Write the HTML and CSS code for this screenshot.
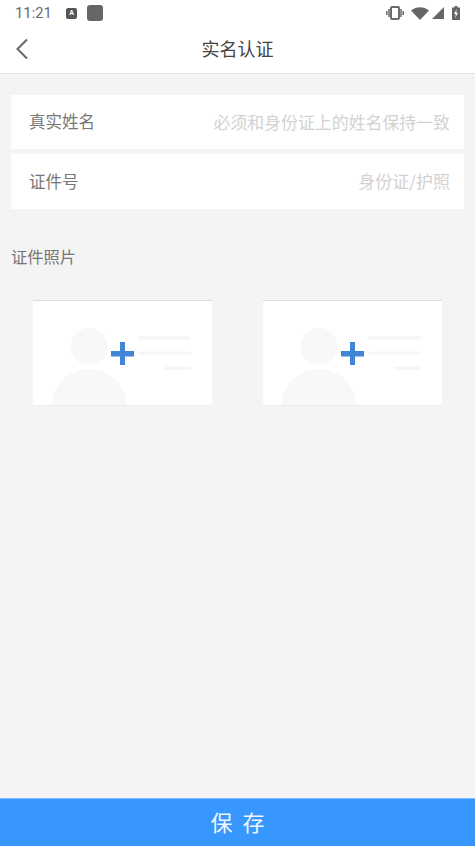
FILE: index.html
```html
<!DOCTYPE html>
<html lang="zh">
<head>
<meta charset="utf-8">
<title>实名认证</title>
<link rel="stylesheet" href="styles.css">
</head>
<body>
<div class="app">
  <div class="status">
    <span class="time">11:21</span>
    <span class="note-a">A</span>
    <span class="note-b"></span>
    <span class="status-right">
      <svg class="ic-vib" width="18" height="14" viewBox="0 0 18 14"><rect x="5" y="1" width="8" height="12" rx="1" fill="none" stroke="#6b6b6b" stroke-width="2"/><path d="M3 3v8M.8 5v4M15 3v8M17.200 5v4" stroke="#6b6b6b" stroke-width="1.500" fill="none"/></svg>
      <svg class="ic-wifi" width="18" height="13" viewBox="0 0 18 13"><path d="M0 3.500C5-1 13-1 18 3.500L9 13z" fill="#666"/></svg>
      <svg class="ic-signal" width="12" height="12" viewBox="0 0 12 12"><path d="M12 0V12H0z" fill="#666"/></svg>
      <svg class="ic-batt" width="8" height="14" viewBox="0 0 8 14"><path d="M2.500 0h3v1.500H8V14H0V1.500h2.500z" fill="#666"/><path d="M4.800 3 2 8h1.800L3.200 12 6 6.800H4.200z" fill="#fff"/></svg>
    </span>
  </div>
  <header class="nav">
    <svg class="back" width="14" height="22" viewBox="0 0 14 22"><path d="M12 1.500 2.500 11 12 20.500" fill="none" stroke="#666" stroke-width="2"/></svg>
    <h1 class="title">实名认证</h1>
  </header>
  <main class="content">
    <div class="rows">
      <div class="row row-a"><span class="label">真实姓名</span><span class="hint">必须和身份证上的姓名保持一致</span></div>
      <div class="row row-b"><span class="label">证件号</span><span class="hint">身份证/护照</span></div>
    </div>
    <div class="section">证件照片</div>
    <div class="photos">
      <div class="photo">
        <svg width="179" height="104" viewBox="0 0 179 104"><circle cx="56" cy="45.500" r="18.500" fill="#f8f8f8"/><path d="M19 104A37 36 0 0 1 93 104z" fill="#f8f8f8"/><rect x="105" y="35" width="53" height="3.500" rx="1.500" fill="#f6f6f6"/><rect x="105" y="50.500" width="53" height="3" rx="1.500" fill="#f6f6f6"/><rect x="131" y="65.500" width="27" height="3.500" rx="1.500" fill="#f6f6f6"/><path d="M87 41h5v9h9v5.500h-9V64h-5v-8.500h-9V50h9z" fill="#4285d6"/></svg>
      </div>
      <div class="photo">
        <svg width="179" height="104" viewBox="0 0 179 104"><circle cx="56" cy="45.500" r="18.500" fill="#f8f8f8"/><path d="M19 104A37 36 0 0 1 93 104z" fill="#f8f8f8"/><rect x="105" y="35" width="53" height="3.500" rx="1.500" fill="#f6f6f6"/><rect x="105" y="50.500" width="53" height="3" rx="1.500" fill="#f6f6f6"/><rect x="131" y="65.500" width="27" height="3.500" rx="1.500" fill="#f6f6f6"/><path d="M87 41h5v9h9v5.500h-9V64h-5v-8.500h-9V50h9z" fill="#4285d6"/></svg>
      </div>
    </div>
  </main>
  <button class="save"><span class="save-text">保 存</span></button>
</div>
</body>
</html>
```
FILE: styles.css
```css
* { box-sizing: border-box; }
html, body { margin: 0; padding: 0; }
body { font-family: "Noto Sans CJK SC", "Roboto", sans-serif; }
.app { width: 475px; height: 846px; display: flex; flex-direction: column; background: #f4f4f4; overflow: hidden; }
.status { height: 26px; background: #fff; display: flex; align-items: center; padding: 0 15px; color: #6b6b6b; flex: none; }
.time { font-family: Roboto, sans-serif; font-size: 14.800px; width: 51px; }
.note-a { width: 11px; height: 11px; background: #555; color: #fff; font: bold 7px/11px Roboto, sans-serif; text-align: center; border-radius: 2px; margin-right: 10px; }
.note-b { width: 16px; height: 16px; background: #666; border-radius: 3px; }
.status-right { margin-left: auto; display: flex; align-items: center; }
.ic-wifi { margin-left: 7px; }
.ic-signal { margin-left: 3px; }
.ic-batt { margin-left: 8px; }
.nav { height: 48px; background: #fff; border-bottom: 1px solid #e2e2e2; display: flex; align-items: center; justify-content: center; position: relative; flex: none; padding-bottom: 4px; }
.back { position: absolute; left: 15px; top: 12px; }
.title { margin: 0; font-size: 18px; font-weight: 400; color: #444; line-height: 1; }
.content { flex: 1; padding: 21px 11px 0; }
.rows { display: flex; flex-direction: column; gap: 5px; }
.row { background: #fff; height: 54px; display: flex; align-items: center; justify-content: space-between; padding: 0 14px 2px 18px; }
.row-b { height: 55px; }
.label { font-size: 16.500px; color: #777; }
.hint { font-size: 16.900px; color: #d2d2d2; }
.row-b .hint { font-size: 17px; }
.section { margin: 36px 0 0; font-size: 16.300px; line-height: 22px; color: #777; }
.photos { margin: 33px 0 0 22px; display: flex; gap: 51px; }
.photo { width: 179px; height: 106px; background: #fff; border-top: 1px solid #dcdcdc; border-bottom: 1px solid #eee; }
.photo svg { display: block; }
.save { flex: none; height: 48px; border: 0; border-top: 1px solid #7cbcff; background: #3797fe; color: #fff; font-family: inherit; font-size: 22px; padding: 0 0 4px; word-spacing: 5px; }
.save-text { opacity: .92; }
```
